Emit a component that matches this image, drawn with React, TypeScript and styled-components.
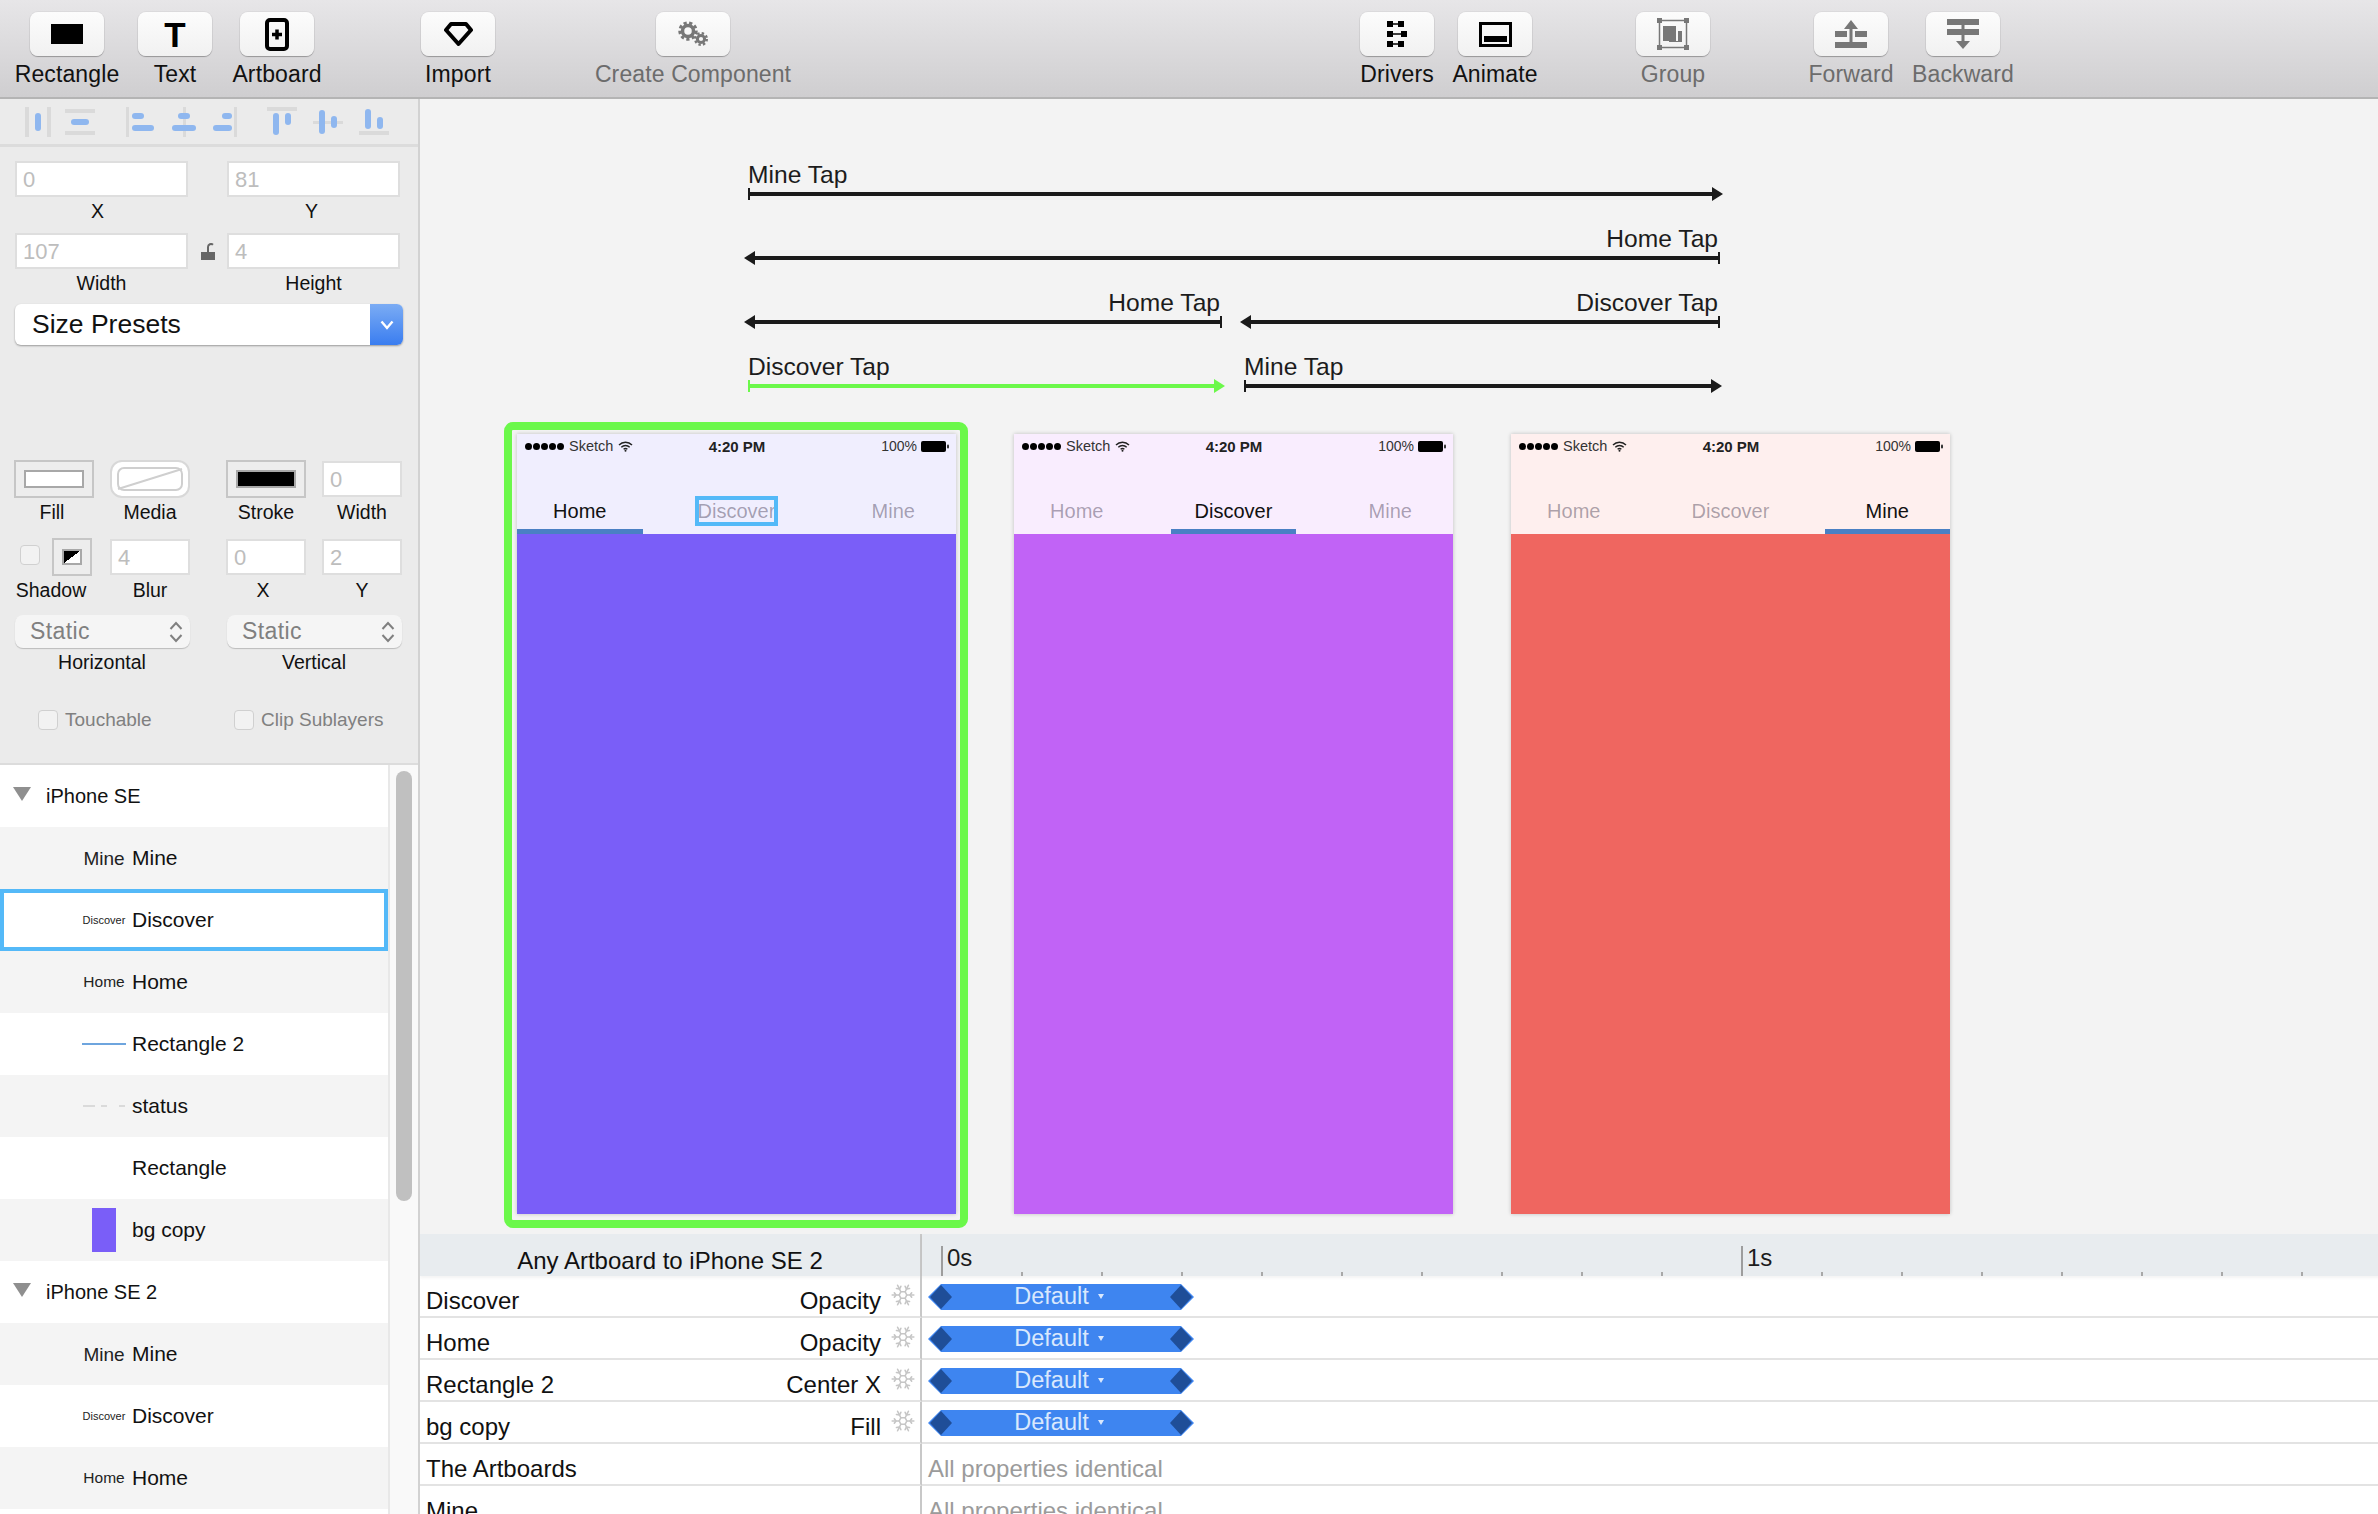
import React from 'react'
import styled, { createGlobalStyle } from 'styled-components'
import { Snowflake } from 'lucide-react'

const Global = createGlobalStyle`
  html, body { margin: 0; padding: 0; background: #f3f3f3; }
  * { box-sizing: border-box; }
  body { font-family: "Liberation Sans", Arial, sans-serif; color: #111; }
`

const Page = styled.div`
  width: 2378px;
  height: 1514px;
  overflow: hidden;
  display: flex;
  flex-direction: column;
`

/* toolbar */
const Toolbar = styled.div`
  height: 99px;
  flex: none;
  display: flex;
  padding-left: 30px;
  background: linear-gradient(#e7e6e8, #cfced0);
  border-bottom: 2px solid #b4b4b4;
`

const ToolItem = styled.div<{ $gap: number; $off?: boolean }>`
  width: 74px;
  flex: none;
  margin-left: ${p => p.$gap}px;
  display: flex;
  flex-direction: column;
  align-items: center;
  padding-top: 12px;
  color: ${p => (p.$off ? '#6c6c6c' : '#111')};
`

const ToolButton = styled.div`
  width: 74px;
  height: 44px;
  flex: none;
  border-radius: 8px;
  background: linear-gradient(#fcfcfc, #f1f1f1);
  box-shadow: 0 1px 1px rgba(0, 0, 0, 0.28), 0 0 0 1px rgba(0, 0, 0, 0.04);
  display: flex;
  align-items: center;
  justify-content: center;
`

const ToolLabel = styled.div`
  margin-top: 3px;
  font-size: 23px;
  letter-spacing: 0.12px;
  line-height: 30px;
  white-space: nowrap;
`

const TextGlyph = styled.span`
  font-size: 35px;
  font-weight: 700;
  line-height: 1;
  color: #000;
`

const gearDots = '3.2 2.45'

const toolIcons: Record<string, React.ReactNode> = {
  rect: (
    <svg width="32" height="20"><rect width="32" height="20" fill="#000" /></svg>
  ),
  text: <TextGlyph>T</TextGlyph>,
  artboard: (
    <svg width="24" height="33" viewBox="0 0 24 33">
      <rect x="2" y="2" width="20" height="29" rx="3" fill="none" stroke="#000" strokeWidth="4" />
      <path d="M7 16.5h10M12 11.5v10" stroke="#000" strokeWidth="3.5" />
    </svg>
  ),
  import: (
    <svg width="29" height="25" viewBox="0 0 29 25">
      <path d="M7 2h15l5 6-12.500 14L2 8z" fill="none" stroke="#000" strokeWidth="4" strokeLinejoin="round" />
    </svg>
  ),
  gears: (
    <svg width="32" height="26" viewBox="0 0 32 26">
      <circle cx="11" cy="10" r="5.5" fill="none" stroke="#777" strokeWidth="3.5" />
      <circle cx="11" cy="10" r="8.2" fill="none" stroke="#777" strokeWidth="3" strokeDasharray={gearDots} />
      <circle cx="24" cy="18" r="3.6" fill="none" stroke="#777" strokeWidth="3" />
      <circle cx="24" cy="18" r="5.8" fill="none" stroke="#777" strokeWidth="2.4" strokeDasharray="2.4 2.15" />
    </svg>
  ),
  drivers: (
    <svg width="20" height="27" viewBox="0 0 20 27" fill="#000">
      <path d="M0 0h6v2.200h5V0h6v6h-6V3.800H6V6H0z" />
      <path d="M0 10h6v2.200h8V10h6v6h-6v-2.200H6V16H0z" />
      <path d="M0 20h6v2.200h5V20h6v6h-6v-2.200H6V26H0z" />
    </svg>
  ),
  animate: (
    <svg width="33" height="25" viewBox="0 0 33 25">
      <rect x="1.500" y="1.500" width="30" height="22" fill="none" stroke="#000" strokeWidth="3" />
      <rect x="5" y="14" width="23" height="6" fill="#000" />
    </svg>
  ),
  group: (
    <svg width="32" height="32" viewBox="0 0 32 32" fill="#777">
      <path d="M2.500 2.500h27v27h-27z" fill="none" stroke="#777" strokeWidth="1.500" />
      <rect width="5" height="5" /><rect x="27" width="5" height="5" />
      <rect y="27" width="5" height="5" /><rect x="27" y="27" width="5" height="5" />
      <rect x="6" y="8" width="13" height="15" />
      <path d="M21 13h4v11H12v-1h9z" />
    </svg>
  ),
  forward: (
    <svg width="32" height="28" viewBox="0 0 32 28" fill="#777">
      <path d="M16 0l7 9h-5.500v13h-3V9H9z" />
      <rect y="11" width="12" height="6" /><rect x="20" y="11" width="12" height="6" />
      <rect y="22" width="32" height="6" />
    </svg>
  ),
  backward: (
    <svg width="32" height="30" viewBox="0 0 32 30" fill="#777">
      <rect width="32" height="6" /><rect y="10" width="32" height="6" />
      <rect x="14.500" y="6" width="3" height="4" />
      <path d="M14.500 16h3v6H23l-7 8-7-8h5.500z" />
    </svg>
  ),
}

const tools = [
  { label: 'Rectangle', icon: 'rect', gap: 0 },
  { label: 'Text', icon: 'text', gap: 34 },
  { label: 'Artboard', icon: 'artboard', gap: 28 },
  { label: 'Import', icon: 'import', gap: 107 },
  { label: 'Create Component', icon: 'gears', gap: 161, off: true },
  { label: 'Drivers', icon: 'drivers', gap: 630 },
  { label: 'Animate', icon: 'animate', gap: 24 },
  { label: 'Group', icon: 'group', gap: 104, off: true },
  { label: 'Forward', icon: 'forward', gap: 104, off: true },
  { label: 'Backward', icon: 'backward', gap: 38, off: true },
]

/* sidebar */
const Main = styled.div`
  flex: 1;
  min-height: 0;
  display: flex;
`

const Sidebar = styled.div`
  width: 420px;
  flex: none;
  display: flex;
  flex-direction: column;
  background: #ebebeb;
  border-right: 2px solid #d2d2d2;
`

const AlignBar = styled.div`
  height: 48px;
  flex: none;
  display: flex;
  align-items: flex-start;
  padding: 8px 0 0 24px;
  border-bottom: 3px solid #dcdcdc;
`

const AlignIconBox = styled.svg<{ $gap: number }>`
  width: 30px;
  height: 30px;
  flex: none;
  margin-left: ${p => p.$gap}px;
`

type Bar = [number, number, number, number]
const alignIcons: { gap: number; grey: Bar[]; blue: Bar[] }[] = [
  { gap: 0, grey: [[1, 0, 4, 30], [23, 0, 4, 30]], blue: [[11, 6, 6, 18]] },
  { gap: 11, grey: [[0, 2, 30, 4], [0, 24, 30, 4]], blue: [[6, 12, 18, 6]] },
  { gap: 30, grey: [[1, 0, 3, 30]], blue: [[7, 6, 12, 6], [7, 18, 22, 6]] },
  { gap: 15, grey: [[13, 0, 3, 30]], blue: [[8, 6, 12, 6], [2, 18, 24, 6]] },
  { gap: 8, grey: [[26, 0, 3, 30]], blue: [[14, 6, 10, 6], [5, 18, 19, 6]] },
  { gap: 29, grey: [[0, 0, 30, 4]], blue: [[6, 6, 6, 22], [18, 6, 6, 12]] },
  { gap: 16, grey: [[0, 14, 30, 3]], blue: [[6, 3, 6, 24], [18, 9, 6, 12]] },
  { gap: 16, grey: [[0, 24, 30, 4]], blue: [[6, 2, 6, 20], [18, 10, 6, 12]] },
]

const Props = styled.div`
  height: 618px;
  flex: none;
  padding-top: 14px;
  border-bottom: 2px solid #dcdcdc;
`

const GeoRow = styled.div`
  display: flex;
  padding-left: 15px;
  margin-bottom: 8px;
`

const GeoField = styled.div`
  width: 173px;
  flex: none;
`

const LockSlot = styled.div`
  width: 39px;
  height: 36px;
  flex: none;
  display: flex;
  align-items: center;
  justify-content: center;
`

const ValueInput = styled.div`
  height: 36px;
  background: #fff;
  border: 2px solid #dedede;
  padding-left: 6px;
  font-size: 22px;
  line-height: 33px;
  color: #bdbdbd;
`

const FieldLabel = styled.div<{ $shift?: number }>`
  text-align: center;
  font-size: 19.5px;
  line-height: 28px;
  padding-right: ${p => (p.$shift ?? 0) * 2}px;
  color: #111;
`

const PresetSelect = styled.div`
  width: 388px;
  height: 41px;
  margin: -1px 0 0 15px;
  display: flex;
  justify-content: space-between;
  background: #fff;
  border-radius: 6px;
  box-shadow: 0 1px 2px rgba(0, 0, 0, 0.35);
  overflow: hidden;
  font-size: 26.5px;
  line-height: 40px;
  padding-left: 17px;
`

const PresetArrow = styled.div`
  width: 33px;
  background: linear-gradient(#7bacf4, #3a7df0);
  display: flex;
  align-items: center;
  justify-content: center;
`

const Columns = styled.div<{ $top: number }>`
  display: grid;
  grid-template-columns: 176px 176px;
  column-gap: 36px;
  padding-left: 14px;
  margin-top: ${p => p.$top}px;
`

const Pair = styled.div`
  display: grid;
  grid-template-columns: 80px 80px;
  column-gap: 16px;
`

const Well = styled.div<{ $round?: boolean }>`
  height: 38px;
  display: flex;
  align-items: center;
  justify-content: center;
  border: 2px solid ${p => (p.$round ? '#d8d8d8' : '#c6c6c6')};
  border-radius: ${p => (p.$round ? '12px' : '0')};
  background: ${p => (p.$round ? '#fff' : '#ededed')};
`

const Swatch = styled.div<{ $fill: string }>`
  width: 60px;
  height: 18px;
  background: ${p => p.$fill};
  border: 2px solid #a8a8a8;
`

const ShadowCell = styled.div`
  display: flex;
  justify-content: flex-end;
  align-items: flex-start;
  gap: 12px;
  padding-right: 2px;
`

const CheckBox = styled.div`
  width: 20px;
  height: 20px;
  flex: none;
  border-radius: 4px;
  background: #f2f2f2;
  border: 1px solid #d0d0d0;
`

const ShadowWell = styled(Well)`
  width: 40px;
`

const ShadowSwatch = styled.div`
  width: 20px;
  height: 16px;
  border: 2px solid #a8a8a8;
  background: linear-gradient(to bottom right, #000 50%, #fff 50%);
`

const ShadowCheck = styled(CheckBox)`
  margin-top: 7px;
`

const SmallInput = styled(ValueInput)`
  margin: 1px 0;
`

const PinSelect = styled.div`
  height: 33px;
  margin-left: 1px;
  padding: 0 7px 0 15px;
  display: flex;
  align-items: center;
  justify-content: space-between;
  background: #f5f5f5;
  border-radius: 8px;
  box-shadow: 0 1px 1px rgba(0, 0, 0, 0.2);
  font-size: 23px;
  letter-spacing: 0.4px;
  color: #808080;
`

const CheckRow = styled.div<{ $left: number }>`
  display: flex;
  align-items: center;
  gap: 7px;
  padding-left: ${p => p.$left}px;
  font-size: 19px;
  color: #808080;
`

/* layers */
const Layers = styled.div`
  flex: 1;
  min-height: 0;
  display: flex;
  overflow: hidden;
`

const LayerList = styled.div`
  width: 388px;
  flex: none;
  background: #fff;
`

const LayerRow = styled.div<{ $shade: boolean; $active?: boolean }>`
  height: 62px;
  display: flex;
  align-items: center;
  background: ${p => (p.$shade ? '#f4f4f4' : '#fff')};
  border: ${p => (p.$active ? '4px solid #54b9f8' : 'none')};
`

const Disclosure = styled.div`
  width: 0;
  height: 0;
  margin: -4px 15px 0 13px;
  border-left: 9px solid transparent;
  border-right: 9px solid transparent;
  border-top: 14px solid #8f8f8f;
`

const HeadName = styled.span`
  font-size: 20px;
`

const Preview = styled.div<{ $inset: number }>`
  width: 42px;
  margin: 0 7px 0 ${p => p.$inset}px;
  flex: none;
  display: flex;
  align-items: center;
  justify-content: center;
`

const PreviewText = styled.span<{ $size: number }>`
  font-size: ${p => p.$size}px;
  white-space: nowrap;
  color: #222;
  line-height: 1;
`

const PreviewLine = styled.div`
  width: 44px;
  height: 2px;
  flex: none;
  background: #6ea5de;
`

const PreviewFill = styled.div`
  width: 24px;
  height: 44px;
  flex: none;
  background: #7a5ef8;
`

const LayerName = styled.span`
  font-size: 21px;
`

const ScrollTrack = styled.div`
  flex: 1;
  background: #f9f9f9;
  border-left: 2px solid #e8e8e8;
  padding: 6px 0 0 6px;
`

const ScrollThumb = styled.div`
  width: 16px;
  height: 430px;
  border-radius: 8px;
  background: #c0c0c0;
`

const layers: { name: string; preview?: React.ReactNode; head?: boolean; active?: boolean }[] = [
  { name: 'iPhone SE', head: true },
  { name: 'Mine', preview: <PreviewText $size={19}>Mine</PreviewText> },
  { name: 'Discover', preview: <PreviewText $size={11}>Discover</PreviewText>, active: true },
  { name: 'Home', preview: <PreviewText $size={15.5}>Home</PreviewText> },
  { name: 'Rectangle 2', preview: <PreviewLine /> },
  {
    name: 'status',
    preview: (
      <svg width="42" height="2"><path d="M0 1h12M18 1h6M36 1h6" stroke="#dadada" strokeWidth="2" /></svg>
    ),
  },
  { name: 'Rectangle' },
  { name: 'bg copy', preview: <PreviewFill /> },
  { name: 'iPhone SE 2', head: true },
  { name: 'Mine', preview: <PreviewText $size={19}>Mine</PreviewText> },
  { name: 'Discover', preview: <PreviewText $size={11}>Discover</PreviewText> },
  { name: 'Home', preview: <PreviewText $size={15.5}>Home</PreviewText> },
  { name: '' },
]

/* canvas */
const Workspace = styled.div`
  flex: 1;
  min-width: 0;
  display: flex;
  flex-direction: column;
`

const Canvas = styled.div`
  flex: 1;
  min-height: 0;
  padding: 64px 0 0 84px;
  background: #f3f3f3;
`

const Connectors = styled.div`
  display: flex;
  flex-direction: column;
  gap: 26px;
  margin-left: 240px;
`

const ConnectorRow = styled.div`
  display: flex;
  height: 38px;
`

const ConnectorBox = styled.div<{ $offset: number; $rtl: boolean }>`
  margin-left: ${p => p.$offset}px;
  flex: none;
  display: flex;
  flex-direction: column;
  text-align: ${p => (p.$rtl ? 'right' : 'left')};
`

const ConnectorLabel = styled.div<{ $rtl: boolean }>`
  font-size: 24.6px;
  line-height: 28px;
  color: #1c1c1c;
  white-space: nowrap;
  margin: -2px 0 -2px;
  padding-right: ${p => (p.$rtl ? '2px' : '0')};
`

function Connector(props: { label: string; width: number; offset?: number; rtl?: boolean; color?: string }) {
  const { label, width: w, offset = 0, rtl = false, color = '#1a1a1a' } = props
  return (
    <ConnectorBox $offset={offset} $rtl={rtl}>
      <ConnectorLabel $rtl={rtl}>{label}</ConnectorLabel>
      <svg width={w} height="14" fill={color}>
        {rtl ? (
          <>
            <polygon points="11,0 0,7 11,14" />
            <rect x="8" y="5" width={w - 8} height="4" />
            <rect x={w - 2} y="1" width="2" height="12" />
          </>
        ) : (
          <>
            <rect x="0" y="1" width="2" height="12" />
            <rect x="0" y="5" width={w - 8} height="4" />
            <polygon points={`${w - 11},0 ${w},7 ${w - 11},14`} />
          </>
        )}
      </svg>
    </ConnectorBox>
  )
}

const Phones = styled.div`
  display: flex;
  gap: 33px;
  margin-top: 29px;
`

const PhoneFrame = styled.div<{ $on?: boolean }>`
  width: 464px;
  height: 806px;
  flex: none;
  padding: 4px 4px 6px 5px;
  border: 8px solid ${p => (p.$on ? '#6bf84a' : 'transparent')};
  border-radius: 9px;
`

const Phone = styled.div`
  width: 439px;
  height: 780px;
  display: flex;
  flex-direction: column;
  box-shadow: 0 0 4px rgba(0, 0, 0, 0.22);
`

const PhoneHeader = styled.div<{ $bg: string }>`
  height: 100px;
  flex: none;
  display: flex;
  flex-direction: column;
  justify-content: space-between;
  background: ${p => p.$bg};
`

const PhoneBody = styled.div<{ $bg: string }>`
  flex: 1;
  background: ${p => p.$bg};
`

const StatusBar = styled.div`
  height: 24px;
  display: grid;
  grid-template-columns: 1fr auto 1fr;
  align-items: center;
  padding: 0 7px 0 8px;
  font-size: 14.5px;
  color: #333;
`

const StatusLeft = styled.div`
  display: flex;
  align-items: center;
  gap: 5px;
`

const StatusRight = styled.div`
  display: flex;
  align-items: center;
  justify-content: flex-end;
  gap: 4px;
  font-size: 14px;
`

const StatusTime = styled.div`
  font-size: 15px;
  font-weight: 700;
  color: #222;
`

const Dots = styled.div`
  display: flex;
  gap: 1px;
`

const Dot = styled.i`
  width: 7px;
  height: 7px;
  border-radius: 50%;
  background: #000;
`

const Tabs = styled.div`
  display: flex;
  justify-content: space-between;
`

const Tab = styled.div<{ $on: boolean; $picked: boolean }>`
  width: 125.5px;
  height: 50px;
  padding-top: 13px;
  text-align: center;
  font-size: 20px;
  line-height: 28px;
  color: ${p => (p.$picked ? '#111' : 'rgba(20, 10, 40, 0.36)')};
  border-bottom: 5px solid ${p => (p.$on ? '#4a80c4' : 'transparent')};
`

const TabHighlight = styled.span`
  display: inline-block;
  line-height: 24px;
  outline: 4px solid #54b9f8;
  outline-offset: -1px;
`

function StatusBarContent() {
  return (
    <StatusBar>
      <StatusLeft>
        <Dots>{[0, 1, 2, 3, 4].map(i => <Dot key={i} />)}</Dots>
        <span>Sketch</span>
        <svg width="15" height="11" viewBox="0 0 15 11" fill="none" stroke="#222">
          <path d="M1 4a9 9 0 0 1 13 0" strokeWidth="1.4" />
          <path d="M3.300 6.200a6 6 0 0 1 8.400 0" strokeWidth="1.4" />
          <path d="M5.600 8.200a3 3 0 0 1 3.800 0" strokeWidth="1.4" />
          <circle cx="7.500" cy="9.800" r="1" fill="#222" stroke="none" />
        </svg>
      </StatusLeft>
      <StatusTime>4:20 PM</StatusTime>
      <StatusRight>
        <span>100%</span>
        <svg width="28" height="11" viewBox="0 0 28 11">
          <rect width="25" height="11" rx="2" fill="#000" />
          <rect x="26" y="3.500" width="2" height="4" rx="1" fill="#333" />
        </svg>
      </StatusRight>
    </StatusBar>
  )
}

const phones = [
  { header: '#f0eefe', body: '#7a5ef8', on: 0, selected: true },
  { header: '#f9edfe', body: '#c163f6', on: 1 },
  { header: '#feefee', body: '#ef6660', on: 2 },
]
const tabNames = ['Home', 'Discover', 'Mine']

/* timeline */
const Timeline = styled.div`
  height: 280px;
  flex: none;
  display: grid;
  grid-template-columns: 502px 1fr;
  grid-template-rows: 42px;
  grid-auto-rows: 42px;
  background: #fff;
  overflow: hidden;
`

const TimelineTitle = styled.div`
  background: #e8ecef;
  border-right: 2px solid #c8c8c8;
  box-shadow: 0 2px 3px rgba(0, 0, 0, 0.05);
  text-align: center;
  font-size: 24px;
  line-height: 28px;
  padding-top: 13px;
`

const Ruler = styled.div`
  background: #e8ecef;
  display: flex;
  align-items: flex-end;
  padding-left: 19px;
  box-shadow: 0 2px 3px rgba(0, 0, 0, 0.05);
`

const RulerSegment = styled.div`
  width: 800px;
  height: 30px;
  flex: none;
  padding-left: 4px;
  border-left: 2px solid #9d9d9d;
  font-size: 24px;
  line-height: 24px;
  color: #1c1c1c;
  background: repeating-linear-gradient(to right, transparent 0, transparent 78px, #a8a8a8 78px, #a8a8a8 80px) left bottom / 100% 4px no-repeat;
`

const RowHead = styled.div`
  display: flex;
  align-items: flex-start;
  padding: 11px 4px 0 6px;
  border-right: 2px solid #c8c8c8;
  border-bottom: 2px solid #e3e3e3;
  font-size: 24px;
  line-height: 28px;
`

const RowName = styled.span`
  flex: 1;
`

const RowProp = styled.span`
  margin-right: 9px;
`

const FreezeIcon = styled(Snowflake)`
  margin-top: -5px;
  color: #c6c6c6;
`

const Lane = styled.div`
  padding: 8px 0 0 6px;
  border-bottom: 2px solid #e3e3e3;
`

const LaneNote = styled.div`
  padding-top: 3px;
  font-size: 24px;
  line-height: 28px;
  color: #9b9b9b;
`

const Curve = styled.div`
  position: relative;
  width: 266px;
  height: 26px;
  display: flex;
  align-items: center;
  justify-content: center;
  background: #3e85f0;
  clip-path: polygon(0 50%, 13px 0, 253px 0, 100% 50%, 253px 100%, 13px 100%);
  color: #d9e8fd;
  font-size: 23.5px;
  padding: 0 4px 1px 0;
`

const CurveCaret = styled.i`
  width: 0;
  height: 0;
  margin-left: 9px;
  border-left: 3px solid transparent;
  border-right: 3px solid transparent;
  border-top: 5px solid #d9e8fd;
`

const CurveHandle = styled.i<{ $side: 'left' | 'right' }>`
  position: absolute;
  top: 1px;
  ${p => p.$side}: 2px;
  width: 22px;
  height: 24px;
  background: #1f4e98;
  clip-path: polygon(50% 0, 100% 50%, 50% 100%, 0 50%);
`

const tracks = [
  { name: 'Discover', prop: 'Opacity' },
  { name: 'Home', prop: 'Opacity' },
  { name: 'Rectangle 2', prop: 'Center X' },
  { name: 'bg copy', prop: 'Fill' },
  { name: 'The Artboards' },
  { name: 'Mine' },
]

function UpDown() {
  return (
    <svg width="14" height="22" viewBox="0 0 14 22" fill="none" stroke="#808080" strokeWidth="2">
      <path d="M1.500 8L7 2l5.500 6M1.500 14L7 20l5.500-6" />
    </svg>
  )
}

export default function App() {
  return (
    <Page>
      <Global />
      <Toolbar>
        {tools.map(t => (
          <ToolItem key={t.label} $gap={t.gap} $off={t.off}>
            <ToolButton>{toolIcons[t.icon]}</ToolButton>
            <ToolLabel>{t.label}</ToolLabel>
          </ToolItem>
        ))}
      </Toolbar>
      <Main>
        <Sidebar>
          <AlignBar>
            {alignIcons.map((icon, i) => (
              <AlignIconBox key={i} $gap={icon.gap} viewBox="0 0 30 30">
                {icon.grey.map((b, j) => <rect key={j} x={b[0]} y={b[1]} width={b[2]} height={b[3]} fill="#dadada" />)}
                {icon.blue.map((b, j) => <rect key={j} x={b[0]} y={b[1]} width={b[2]} height={b[3]} rx="3" fill="#8fb7ef" />)}
              </AlignIconBox>
            ))}
          </AlignBar>
          <Props>
            <GeoRow>
              <GeoField>
                <ValueInput>0</ValueInput>
                <FieldLabel $shift={4}>X</FieldLabel>
              </GeoField>
              <LockSlot />
              <GeoField>
                <ValueInput>81</ValueInput>
                <FieldLabel $shift={2}>Y</FieldLabel>
              </GeoField>
            </GeoRow>
            <GeoRow>
              <GeoField>
                <ValueInput>107</ValueInput>
                <FieldLabel>Width</FieldLabel>
              </GeoField>
              <LockSlot>
                <svg width="14" height="17" viewBox="0 0 14 17">
                  <rect y="9" width="14" height="8" fill="#666" />
                  <path d="M7 9V4a3 3 0 0 1 5 -2.200" fill="none" stroke="#666" strokeWidth="2" />
                </svg>
              </LockSlot>
              <GeoField>
                <ValueInput>4</ValueInput>
                <FieldLabel>Height</FieldLabel>
              </GeoField>
            </GeoRow>
            <PresetSelect>
              Size Presets
              <PresetArrow>
                <svg width="14" height="10" viewBox="0 0 14 10" fill="none" stroke="#fff" strokeWidth="2.4">
                  <path d="M1.500 1.500L7 8l5.500-6.500" />
                </svg>
              </PresetArrow>
            </PresetSelect>
            <Columns $top={115}>
              <Pair>
                <div>
                  <Well><Swatch $fill="#fff" /></Well>
                  <FieldLabel $shift={2}>Fill</FieldLabel>
                </div>
                <div>
                  <Well $round>
                    <svg width="66" height="24" viewBox="0 0 66 24" fill="none" stroke="#cfcfcf" strokeWidth="2">
                      <rect x="1" y="1" width="64" height="22" rx="6" />
                      <path d="M1 22L65 2" />
                    </svg>
                  </Well>
                  <FieldLabel>Media</FieldLabel>
                </div>
              </Pair>
              <Pair>
                <div>
                  <Well><Swatch $fill="#000" /></Well>
                  <FieldLabel>Stroke</FieldLabel>
                </div>
                <div>
                  <SmallInput>0</SmallInput>
                  <FieldLabel>Width</FieldLabel>
                </div>
              </Pair>
            </Columns>
            <Columns $top={12}>
              <Pair>
                <div>
                  <ShadowCell>
                    <ShadowCheck />
                    <ShadowWell><ShadowSwatch /></ShadowWell>
                  </ShadowCell>
                  <FieldLabel $shift={3}>Shadow</FieldLabel>
                </div>
                <div>
                  <SmallInput>4</SmallInput>
                  <FieldLabel>Blur</FieldLabel>
                </div>
              </Pair>
              <Pair>
                <div>
                  <SmallInput>0</SmallInput>
                  <FieldLabel $shift={3}>X</FieldLabel>
                </div>
                <div>
                  <SmallInput>2</SmallInput>
                  <FieldLabel>Y</FieldLabel>
                </div>
              </Pair>
            </Columns>
            <Columns $top={11}>
              <div>
                <PinSelect>Static <UpDown /></PinSelect>
                <FieldLabel>Horizontal</FieldLabel>
              </div>
              <div>
                <PinSelect>Static <UpDown /></PinSelect>
                <FieldLabel>Vertical</FieldLabel>
              </div>
            </Columns>
            <Columns $top={33}>
              <CheckRow $left={24}><CheckBox />Touchable</CheckRow>
              <CheckRow $left={8}><CheckBox />Clip Sublayers</CheckRow>
            </Columns>
          </Props>
          <Layers>
            <LayerList>
              {layers.map((l, i) => (
                <LayerRow key={i} $shade={i % 2 === 1} $active={l.active}>
                  {l.head ? (
                    <>
                      <Disclosure />
                      <HeadName>{l.name}</HeadName>
                    </>
                  ) : (
                    <>
                      <Preview $inset={l.active ? 79 : 83}>{l.preview}</Preview>
                      <LayerName>{l.name}</LayerName>
                    </>
                  )}
                </LayerRow>
              ))}
            </LayerList>
            <ScrollTrack><ScrollThumb /></ScrollTrack>
          </Layers>
        </Sidebar>
        <Workspace>
          <Canvas>
            <Connectors>
              <ConnectorRow>
                <Connector label="Mine Tap" width={975} offset={4} />
              </ConnectorRow>
              <ConnectorRow>
                <Connector label="Home Tap" width={976} rtl />
              </ConnectorRow>
              <ConnectorRow>
                <Connector label="Home Tap" width={478} rtl />
                <Connector label="Discover Tap" width={480} offset={18} rtl />
              </ConnectorRow>
              <ConnectorRow>
                <Connector label="Discover Tap" width={477} offset={4} color="#6bf84a" />
                <Connector label="Mine Tap" width={478} offset={19} />
              </ConnectorRow>
            </Connectors>
            <Phones>
              {phones.map((p, i) => (
                <PhoneFrame key={i} $on={p.selected}>
                  <Phone>
                    <PhoneHeader $bg={p.header}>
                      <StatusBarContent />
                      <Tabs>
                        {tabNames.map((name, t) => (
                          <Tab key={name} $on={t === p.on} $picked={t === p.on}>
                            {p.selected && name === 'Discover' ? <TabHighlight>{name}</TabHighlight> : name}
                          </Tab>
                        ))}
                      </Tabs>
                    </PhoneHeader>
                    <PhoneBody $bg={p.body} />
                  </Phone>
                </PhoneFrame>
              ))}
            </Phones>
          </Canvas>
          <Timeline>
            <TimelineTitle>Any Artboard to iPhone SE 2</TimelineTitle>
            <Ruler>
              <RulerSegment>0s</RulerSegment>
              <RulerSegment>1s</RulerSegment>
            </Ruler>
            {tracks.map(t => (
              <React.Fragment key={t.name}>
                <RowHead>
                  <RowName>{t.name}</RowName>
                  {t.prop && <RowProp>{t.prop}</RowProp>}
                  {t.prop && <FreezeIcon size={26} strokeWidth={1.5} />}
                </RowHead>
                <Lane>
                  {t.prop ? (
                    <Curve>
                      <CurveHandle $side="left" />
                      Default
                      <CurveCaret />
                      <CurveHandle $side="right" />
                    </Curve>
                  ) : (
                    <LaneNote>All properties identical</LaneNote>
                  )}
                </Lane>
              </React.Fragment>
            ))}
          </Timeline>
        </Workspace>
      </Main>
    </Page>
  )
}
